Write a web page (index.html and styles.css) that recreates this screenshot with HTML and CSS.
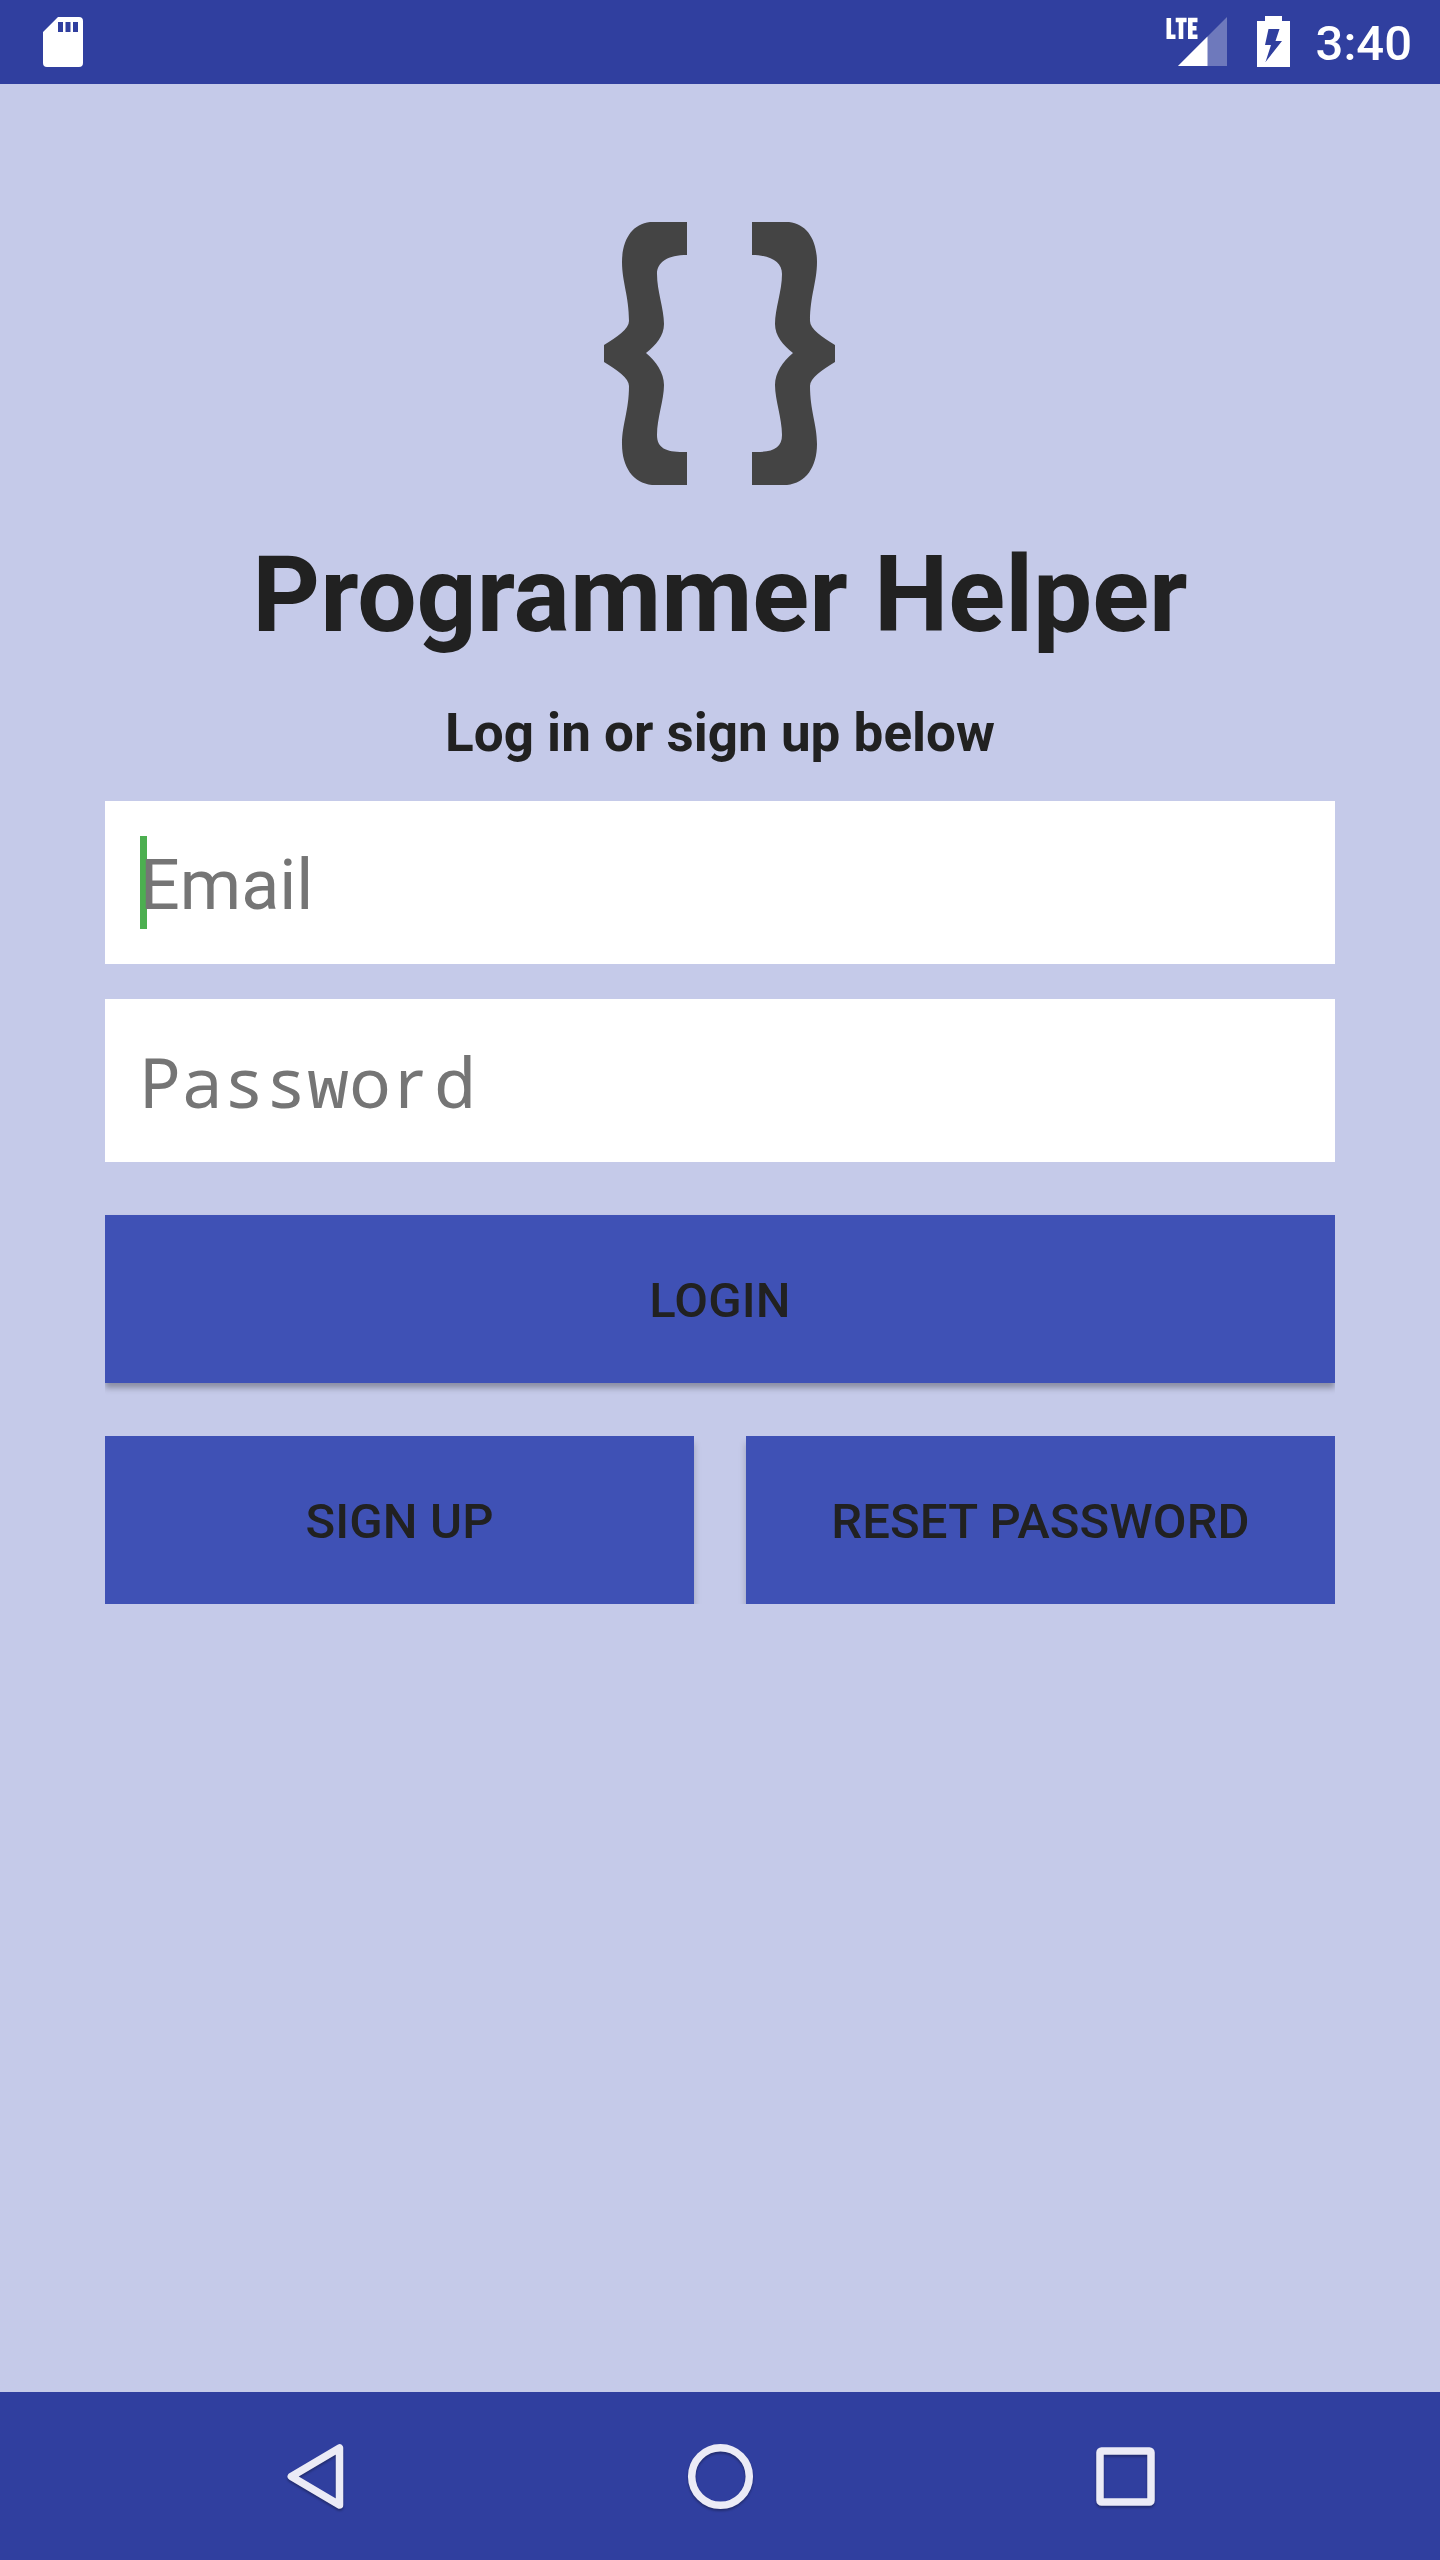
FILE: index.html
```html
<!DOCTYPE html>
<html lang="en">
<head>
<meta charset="utf-8">
<title>Programmer Helper</title>
<link rel="stylesheet" href="styles.css">
</head>
<body>
<div class="screen">
  <header class="status-bar">
    <svg class="sd-icon" width="40" height="50" viewBox="0 0 40 50"><path fill="#fff" fill-rule="evenodd" d="M15 0H36Q40 0 40 4V46Q40 50 36 50H4Q0 50 0 46V15ZM15 5V15H20V5ZM22.500 5V15H27.500V5ZM30 5V15H35V5Z"/></svg>
    <div class="status-right">
      <svg class="signal-icon" width="62" height="50" viewBox="0 0 62 50">
        <path fill="#fff" fill-opacity=".3" d="M61 0V49H12Z"/>
        <path fill="#fff" d="M41.500 19.500V49H12Z"/>
        <path fill="none" stroke="#fff" stroke-width="4.600" d="M2.800 1V19.700H9.500M9.700 3H20.600M15 3V22M31.500 3H24.300V19.700H31.500M24 11.300H30.500"/>
      </svg>
      <svg class="battery-icon" width="33" height="51" viewBox="0 0 33 51"><path fill="#fff" fill-rule="evenodd" d="M8 0H25V5H33V51H0V5H8ZM11.500 13L8 29H14L8.500 46L25 25H18.500L22.500 13Z"/></svg>
      <span class="clock">3:40</span>
    </div>
  </header>
  <main class="content">
    <svg class="logo" width="232" height="264" viewBox="0 0 232 264">
      <path id="brace" fill="#444" d="M83 0H46C28 2 18 18 18 40C18 60 25 74 25 99C25 107 13 115 0 123V140C13 148 25 156 25 164C25 189 18 202 18 222C18 245 29 261 48 263H83V230H79C62 230 53 226 53 213C53 196 60 178 60 163C60 151 52 139 42 131C52 123 60 114 60 102C60 87 53 69 53 52C53 40 64 33 83 33Z"/>
      <use href="#brace" transform="matrix(-1 0 0 1 231 0)"/>
    </svg>
    <h1 class="title">Programmer Helper</h1>
    <p class="subtitle">Log in or sign up below</p>
    <form class="form">
      <div class="field field-focused"><span class="hint">Email</span></div>
      <div class="field"><span class="hint hint-mono">Passwo<span class="plain-r">r</span>d</span></div>
      <button type="button" class="button button-wide">LOGIN</button>
      <div class="button-row">
        <button type="button" class="button">SIGN UP</button>
        <button type="button" class="button">RESET PASSWORD</button>
      </div>
    </form>
  </main>
  <nav class="nav-bar">
    <svg class="nav-icon" width="90" height="90" viewBox="0 0 90 90"><path d="M69.500 16V73L21.300 44.500Z"/></svg>
    <svg class="nav-icon" width="90" height="90" viewBox="0 0 90 90"><circle cx="45.500" cy="44.500" r="28.800"/></svg>
    <svg class="nav-icon" width="90" height="90" viewBox="0 0 90 90"><rect x="20" y="19" width="51" height="51" rx="1.500"/></svg>
  </nav>
</div>
</body>
</html>
```
FILE: styles.css
```css
* { box-sizing: border-box; }
body { margin: 0; font-family: Roboto, sans-serif; color: #212121; }
.screen { width: 1440px; height: 2560px; display: flex; flex-direction: column; background: #c5cae9; }
.status-bar { height: 84px; background: #303f9f; display: flex; justify-content: space-between; align-items: flex-start; padding: 0 28px 0 43px; }
.sd-icon { margin-top: 17px; }
.status-right { display: flex; align-items: flex-start; }
.signal-icon { margin-top: 17px; }
.battery-icon { margin: 16px 26px 0 29px; }
.clock { color: #fff; font-size: 49px; font-weight: 500; line-height: 58px; margin-top: 15px; }
.content { flex: 1; padding: 138px 105px 0; display: flex; flex-direction: column; align-items: center; }
.logo { display: block; }
.title { margin: 39px 0 0; font-size: 105.3px; line-height: 140px; font-weight: 700; }
.subtitle { margin: 37px 0 0; font-size: 53px; line-height: 62px; font-weight: 700; }
.form { width: 100%; margin-top: 37px; }
.field { position: relative; height: 163px; padding: 38px 35px 32px; background: #fff; margin-bottom: 35px; }
.field-focused::before { content: ""; position: absolute; left: 35px; top: 35px; width: 7px; height: 93px; background: #4caf50; }
.hint { position: relative; display: block; font-size: 70px; line-height: 93px; color: #757575; }
.hint-mono { font-family: "Noto Sans Mono", "Droid Sans Mono", "Open Sans", monospace; margin: -2px 0 0 -1px; }
.plain-r { font-family: "Noto Sans", sans-serif; margin: 0 10.2px 0 4px; line-height: 1; }
.button { border: 0; padding: 4px 0 0; height: 168px; background: #3f51b5; color: #212121; font: 500 49px/164px Roboto, sans-serif; letter-spacing: .15px; text-align: center; }
.button-wide { display: block; width: 100%; margin-top: 53px; box-shadow: 0 5px 6px rgba(0,0,0,.3); clip-path: inset(-10px 0 -20px 0); }
.button-row { display: grid; grid-template-columns: 1fr 1fr; gap: 52px; margin-top: 53px; overflow: hidden; }
.button-row .button { box-shadow: 0 7px 7px rgba(0,0,0,.22); }
.nav-bar { height: 168px; background: #303f9f; display: flex; justify-content: center; gap: 315px; padding-top: 40px; }
.nav-icon { fill: none; stroke: #ebebf6; stroke-width: 7.5; stroke-linejoin: round; filter: drop-shadow(0 2px 1px rgba(0,0,0,.3)); }
```
